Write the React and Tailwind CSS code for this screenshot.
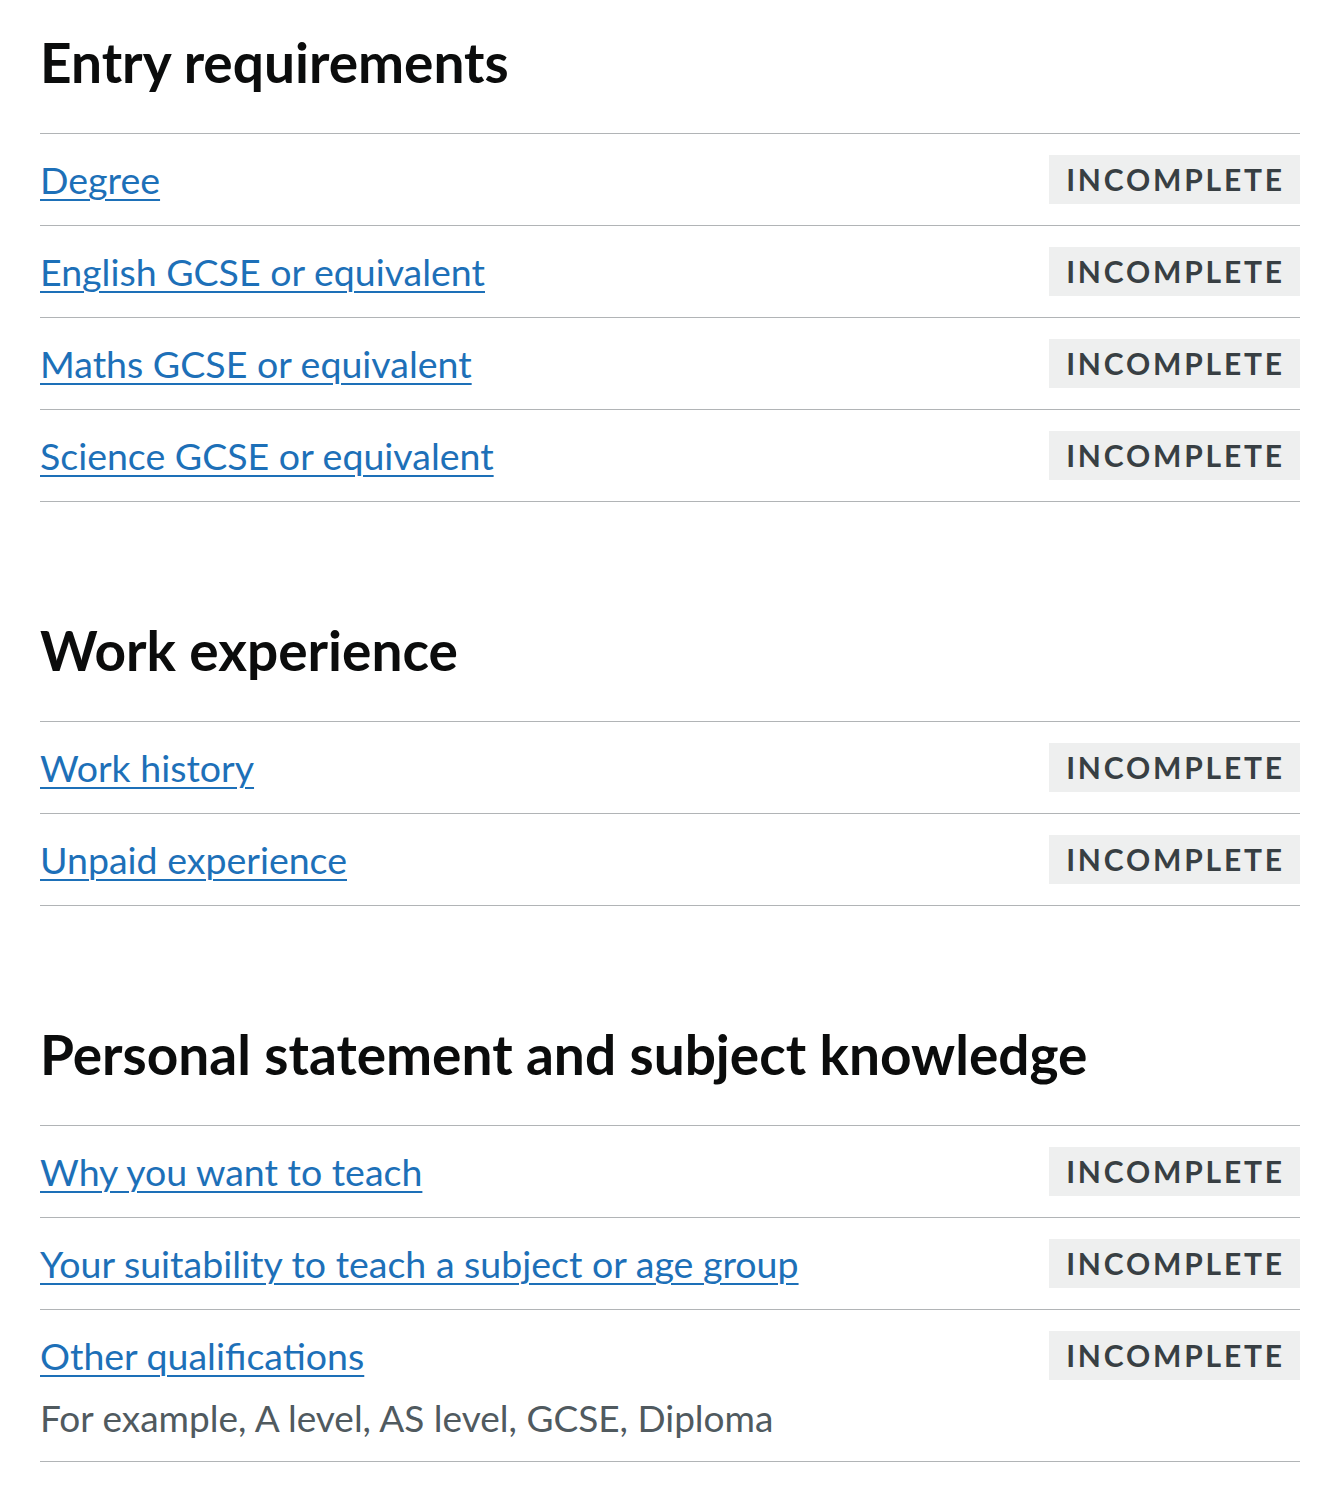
const sections = [
  {
    title: 'Entry requirements',
    items: [
      { label: 'Degree' },
      { label: 'English GCSE or equivalent' },
      { label: 'Maths GCSE or equivalent' },
      { label: 'Science GCSE or equivalent' },
    ],
  },
  {
    title: 'Work experience',
    items: [{ label: 'Work history' }, { label: 'Unpaid experience' }],
  },
  {
    title: 'Personal statement and subject knowledge',
    items: [
      { label: 'Why you want to teach' },
      { label: 'Your suitability to teach a subject or age group' },
      { label: 'Other qualifications', hint: 'For example, A level, AS level, GCSE, Diploma' },
    ],
  },
];

function TaskRow({ item }) {
  return (
    <li className="flex items-start justify-between border-b border-[#b1b4b6] py-[21px]">
      <div className="flex flex-col">
        <a
          href="#"
          className="text-[37.5px] leading-[49px] text-[#1d70b8] underline decoration-[2px] underline-offset-[5px]"
        >
          {item.label}
        </a>
        {item.hint && (
          <p className="mt-[16px] text-[37px] leading-[44px] text-[#505a5f]">{item.hint}</p>
        )}
      </div>
      <strong className="flex h-[49px] w-[251px] shrink-0 items-center justify-center bg-[#eeefef] pl-[2px] text-[30px] font-bold uppercase tracking-[2.8px] text-[#383f43]">
        Incomplete
      </strong>
    </li>
  );
}

export default function App() {
  return (
    <div
      className="min-h-[1500px] bg-white px-[40px] pt-[34px] text-[#0b0c0c]"
      style={{ fontFamily: 'Lato, "Noto Sans", Arial, sans-serif' }}
    >
      {sections.map((section) => (
        <section key={section.title} className="mb-[120px]">
          <h2 className="mb-[43px] text-[55px] font-bold leading-[56px]">{section.title}</h2>
          <ul className="border-t border-[#b1b4b6]">
            {section.items.map((item) => (
              <TaskRow key={item.label} item={item} />
            ))}
          </ul>
        </section>
      ))}
    </div>
  );
}
